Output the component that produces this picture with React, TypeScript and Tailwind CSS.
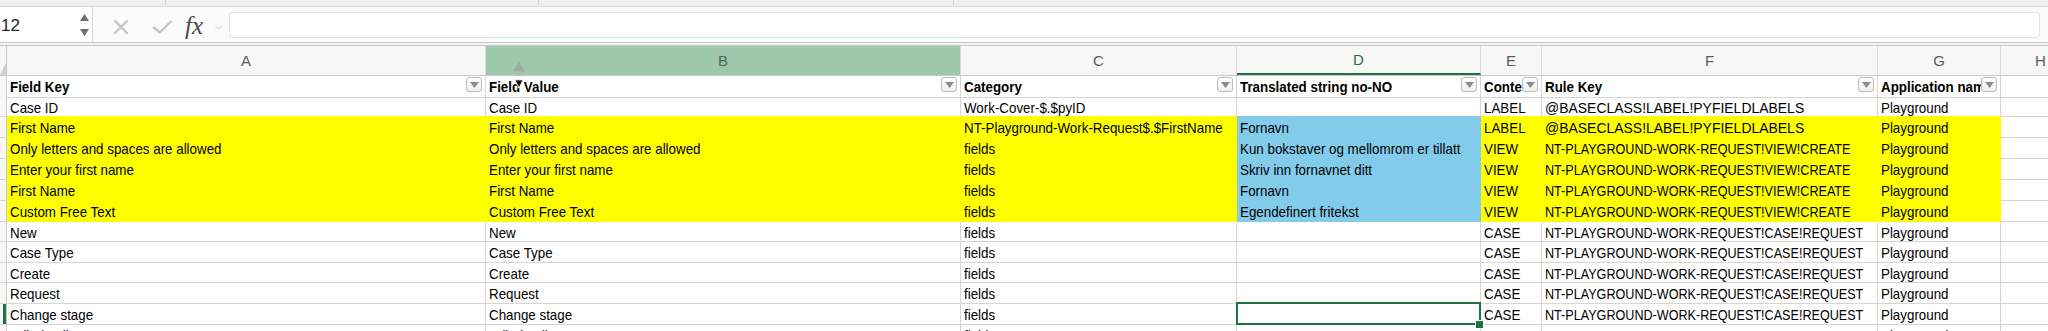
import { ChevronDown } from 'lucide-react';

type Fill = 'y' | 'b' | undefined;

type Row = {
  v: string[];
  hl?: boolean;
  sel?: boolean;
  h: string;
};

const GRID = 'grid grid-cols-[7px_479px_475px_276px_244px_61px_336px_123px_80px]';

const BG: Record<string, string> = { y: 'bg-[#ffff00]', b: 'bg-[#83cbea]' };
const BR: Record<string, string> = { y: 'border-r-[#ffff00]', b: 'border-r-[#83cbea]', g: 'border-r-[#d6d6d6]' };
const BB: Record<string, string> = { y: 'border-b-[#ffff00]', b: 'border-b-[#83cbea]', g: 'border-b-[#d6d6d6]' };

const COL_LETTERS = ['A', 'B', 'C', 'D', 'E', 'F', 'G', 'H'];
const HEADERS = ['Field Key', 'Field Value', 'Category', 'Translated string no-NO', 'Content', 'Rule Key', 'Application name'];

const CASE_KEY = 'NT-PLAYGROUND-WORK-REQUEST!CASE!REQUEST';
const VIEW_KEY = 'NT-PLAYGROUND-WORK-REQUEST!VIEW!CREATE';
const LABEL_KEY = '@BASECLASS!LABEL!PYFIELDLABELS';

const ROWS: Row[] = [
  { v: ['Case ID', 'Case ID', 'Work-Cover-$.$pyID', '', 'LABEL', LABEL_KEY, 'Playground'], h: 'h-[20px]' },
  { v: ['First Name', 'First Name', 'NT-Playground-Work-Request$.$FirstName', 'Fornavn', 'LABEL', LABEL_KEY, 'Playground'], hl: true, h: 'h-[21px]' },
  { v: ['Only letters and spaces are allowed', 'Only letters and spaces are allowed', 'fields', 'Kun bokstaver og mellomrom er tillatt', 'VIEW', VIEW_KEY, 'Playground'], hl: true, h: 'h-[21px]' },
  { v: ['Enter your first name', 'Enter your first name', 'fields', 'Skriv inn fornavnet ditt', 'VIEW', VIEW_KEY, 'Playground'], hl: true, h: 'h-[21px]' },
  { v: ['First Name', 'First Name', 'fields', 'Fornavn', 'VIEW', VIEW_KEY, 'Playground'], hl: true, h: 'h-[21px]' },
  { v: ['Custom Free Text', 'Custom Free Text', 'fields', 'Egendefinert fritekst', 'VIEW', VIEW_KEY, 'Playground'], hl: true, h: 'h-[21px]' },
  { v: ['New', 'New', 'fields', '', 'CASE', CASE_KEY, 'Playground'], h: 'h-[20px]' },
  { v: ['Case Type', 'Case Type', 'fields', '', 'CASE', CASE_KEY, 'Playground'], h: 'h-[21px]' },
  { v: ['Create', 'Create', 'fields', '', 'CASE', CASE_KEY, 'Playground'], h: 'h-[20px]' },
  { v: ['Request', 'Request', 'fields', '', 'CASE', CASE_KEY, 'Playground'], h: 'h-[21px]' },
  { v: ['Change stage', 'Change stage', 'fields', '', 'CASE', CASE_KEY, 'Playground'], sel: true, h: 'h-[21px]' },
  { v: ['Edit details', 'Edit details', 'fields', '', 'CASE', CASE_KEY, 'Playground'], h: 'h-[21px]' },
];

const fillOf = (r: Row | undefined, col: number): Fill => {
  if (!r || !r.hl || col > 6) return undefined;
  return col === 3 ? 'b' : 'y';
};

const squeeze = (val: string, col: number) => {
  if (col !== 5) return 'scale-x-[0.89]';
  return val === LABEL_KEY ? 'scale-x-[0.93]' : 'scale-x-[0.84]';
};

function CellText({ children, bold, scale }: { children: string; bold?: boolean; scale: string }) {
  return (
    <span className={`block w-max origin-left text-[15px] leading-[21px] whitespace-nowrap ${scale} ${bold ? 'font-bold' : ''}`}>
      {children}
    </span>
  );
}

function FilterButton() {
  return (
    <div className="shrink-0 mt-[1px] mr-[3px] w-[16px] h-[15px] rounded-[3px] border border-[#bcbcbc] bg-gradient-to-b from-white to-[#efefef] flex items-center justify-center">
      <svg width="9" height="6" viewBox="0 0 9 6">
        <path d="M0 0 L9 0 L4.5 6 Z" fill="#8c8c8c" />
      </svg>
    </div>
  );
}

export default function App() {
  return (
    <div className="w-[2048px] h-[331px] overflow-hidden bg-white text-black font-['Liberation_Sans',sans-serif]">
      {/* toolbar remnant */}
      <div className="flex h-[7px] bg-[#efefef] border-b border-[#d5d5d5]">
        <div className="w-[165px]" />
        <div className="w-px h-[5px] bg-[#d2d2d2]" />
        <div className="w-[372px]" />
        <div className="w-px h-[5px] bg-[#d2d2d2]" />
        <div className="w-[414px]" />
        <div className="w-px h-[5px] bg-[#d2d2d2]" />
      </div>

      {/* formula bar */}
      <div className="flex h-[35px] bg-[#fbfbfb]">
        <div className="w-[93px] flex items-center justify-between border-r border-[#d8d8d8] bg-white pl-[1px] pr-[3px]">
          <span className="text-[17px] leading-none text-[#222] mt-[1px]">12</span>
          <div className="flex flex-col gap-[8px] mt-[1px]">
            <svg width="9" height="7" viewBox="0 0 9 7"><path d="M4.5 0 L9 7 L0 7 Z" fill="#6e6e6e" /></svg>
            <svg width="9" height="7" viewBox="0 0 9 7"><path d="M0 0 L9 0 L4.5 7 Z" fill="#6e6e6e" /></svg>
          </div>
        </div>
        <div className="flex items-center pt-[5px]">
          <svg className="ml-[20px]" width="16" height="16" viewBox="0 0 16 16">
            <path d="M2 2 L14 14 M14 2 L2 14" stroke="#c6c6c6" strokeWidth="2.4" strokeLinecap="round" />
          </svg>
          <svg className="ml-[23px]" width="21" height="14" viewBox="0 0 21 14">
            <path d="M2 7.5 L7.5 12.5 L19 1.5" stroke="#c6c6c6" strokeWidth="2.4" fill="none" strokeLinecap="round" strokeLinejoin="round" />
          </svg>
          <span className="ml-[12px] -mt-[4px] text-[25px] leading-none italic text-[#4a4a4a] font-['Liberation_Serif',serif]">fx</span>
          <ChevronDown className="ml-[10px] w-[11px] h-[11px] text-[#c2c2c2]" strokeWidth={2} />
        </div>
        <div className="flex-1 ml-[5px] mr-[8px] mt-[5px] mb-[4px] bg-white border border-[#e4e4e4] rounded-[3px]" />
      </div>

      <div className="h-[4px] border-t border-b border-[#cbcbcb] bg-[#f2f2f2]" />

      {/* column letters */}
      <div className={`${GRID} h-[30px] bg-[#f7f7f7] border-b border-[#c9c9c9]`}>
        <div className="border-r border-[#c9c9c9] flex items-end">
          <svg width="6" height="12" viewBox="0 0 6 12"><path d="M6 0 L6 12 L0 12 Z" fill="#cfcfcf" /></svg>
        </div>
        {COL_LETTERS.map((c) => (
          <div
            key={c}
            className={`relative flex items-center justify-center border-r border-[#dcdcdc] text-[15px] pt-[2px] ${
              c === 'B' ? 'bg-[#9bc9a9] text-[#4f6b58]' : c === 'D' ? 'text-[#1f7244] border-b-2 border-b-[#1f7244]' : 'text-[#5c5c5c]'
            }`}
          >
            {c}
            {c === 'B' && (
              <svg className="absolute left-[27px] top-[15px]" width="12" height="11" viewBox="0 0 12 11">
                <path d="M6 0.5 L11.5 10.5 L0.5 10.5 Z" fill="#a3a8a4" />
              </svg>
            )}
          </div>
        ))}
      </div>

      {/* header row */}
      <div className={`${GRID} h-[21px]`}>
        <div className="border-r border-b border-[#c9c9c9] bg-[#f7f7f7]" />
        {HEADERS.map((h, i) => (
          <div key={h} className="relative flex border-r border-b border-[#d6d6d6]">
            <div className="flex-1 min-w-0 pl-[3px] overflow-hidden">
              <CellText bold scale="scale-x-[0.89]">{h}</CellText>
            </div>
            <FilterButton />
            {i === 1 && (
              <svg className="absolute left-[28px] top-[3px]" width="10" height="10" viewBox="0 0 10 10">
                <path d="M0.8 0.8 L9.2 0.8 L5 9.2 Z" fill="#111" stroke="#fff" strokeWidth="1" />
              </svg>
            )}
          </div>
        ))}
        <div className="border-b border-r border-[#d6d6d6]" />
      </div>

      {/* data rows */}
      {ROWS.map((r, ri) => {
        const below = ROWS[ri + 1];
        return (
          <div key={ri} className={`${GRID} ${r.h}`}>
            <div className="flex justify-end border-r border-b border-r-[#c9c9c9] border-b-[#d6d6d6] bg-[#f7f7f7]">
              {r.sel && <div className="w-[3px] bg-[#1f7244]" />}
            </div>
            {[...r.v, ''].map((val, ci) => {
              const own = fillOf(r, ci);
              const right = own ?? fillOf(r, ci + 1) ?? 'g';
              const bottom = own ?? fillOf(below, ci) ?? 'g';
              const selected = r.sel && ci === 3;
              return (
                <div
                  key={ci}
                  className={`relative min-h-0 border-r border-b ${BR[right]} ${BB[bottom]} ${own ? BG[own] : ''} ${selected ? 'z-10' : ''}`}
                >
                  <div className="pl-[3px] h-full overflow-hidden">
                    <CellText scale={squeeze(val, ci)}>{val}</CellText>
                  </div>
                  {selected && (
                    <>
                      <div className="absolute -left-[1px] -top-[2px] -right-[1px] -bottom-[1px] border-2 border-[#1f7244]" />
                      <div className="absolute -right-[3px] -bottom-[4px] w-[7px] h-[7px] bg-[#1f7244] outline outline-1 outline-white" />
                    </>
                  )}
                </div>
              );
            })}
          </div>
        );
      })}
    </div>
  );
}
